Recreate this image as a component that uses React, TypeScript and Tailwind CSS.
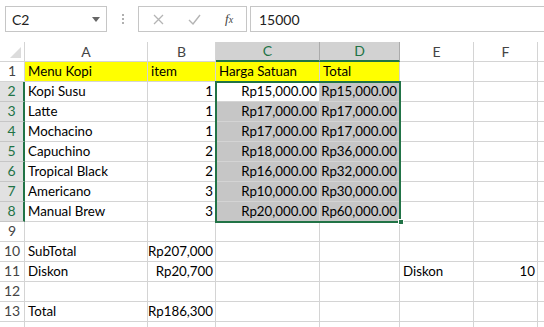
const font = { fontFamily: "Lato, 'Liberation Sans', sans-serif" };

type Cell = { t?: string; r?: boolean; y?: boolean; s?: boolean; w?: boolean };

const rows: Cell[][] = [
  [{ t: "Menu Kopi", y: true }, { t: "item", y: true }, { t: "Harga Satuan", y: true }, { t: "Total", y: true }, {}, {}],
  [{ t: "Kopi Susu" }, { t: "1", r: true }, { t: "Rp15,000.00", r: true, w: true }, { t: "Rp15,000.00", r: true, s: true }, {}, {}],
  [{ t: "Latte" }, { t: "1", r: true }, { t: "Rp17,000.00", r: true, s: true }, { t: "Rp17,000.00", r: true, s: true }, {}, {}],
  [{ t: "Mochacino" }, { t: "1", r: true }, { t: "Rp17,000.00", r: true, s: true }, { t: "Rp17,000.00", r: true, s: true }, {}, {}],
  [{ t: "Capuchino" }, { t: "2", r: true }, { t: "Rp18,000.00", r: true, s: true }, { t: "Rp36,000.00", r: true, s: true }, {}, {}],
  [{ t: "Tropical Black" }, { t: "2", r: true }, { t: "Rp16,000.00", r: true, s: true }, { t: "Rp32,000.00", r: true, s: true }, {}, {}],
  [{ t: "Americano" }, { t: "3", r: true }, { t: "Rp10,000.00", r: true, s: true }, { t: "Rp30,000.00", r: true, s: true }, {}, {}],
  [{ t: "Manual Brew" }, { t: "3", r: true }, { t: "Rp20,000.00", r: true, s: true }, { t: "Rp60,000.00", r: true, s: true }, {}, {}],
  [{}, {}, {}, {}, {}, {}],
  [{ t: "SubTotal" }, { t: "Rp207,000", r: true }, {}, {}, {}, {}],
  [{ t: "Diskon" }, { t: "Rp20,700", r: true }, {}, {}, { t: "Diskon" }, { t: "10", r: true }],
  [{}, {}, {}, {}, {}, {}],
  [{ t: "Total" }, { t: "Rp186,300", r: true }, {}, {}, {}, {}],
  [{}, {}, {}, {}, {}, {}],
];

const cols = ["A", "B", "C", "D", "E", "F", ""];

export default function App() {
  return (
    <div className="w-[544px] h-[327px] overflow-hidden bg-white relative" style={font}>
      {/* formula bar */}
      <div className="h-[42px] flex items-start pt-[6px] pl-[5px]">
        <div className="w-[102px] h-[26px] border border-[#c6c6c6] flex items-center justify-between pl-[6px] pr-[6px] text-[14px] text-[#222]">
          <span>C2</span>
          <svg width="8" height="5" viewBox="0 0 8 5"><path d="M0 0h8L4 5z" fill="#666" /></svg>
        </div>
        <div className="w-[31px] h-[26px] flex flex-col items-center justify-center gap-[2px]">
          <span className="w-[2px] h-[2px] bg-[#b0b0b0]" />
          <span className="w-[2px] h-[2px] bg-[#b0b0b0]" />
          <span className="w-[2px] h-[2px] bg-[#b0b0b0]" />
        </div>
        <div className="w-[109px] h-[26px] border border-[#c6c6c6] flex items-center pl-[14px]">
          <svg width="11" height="11" viewBox="0 0 11 11"><path d="M1 1l9 9M10 1l-9 9" stroke="#b4b4b4" strokeWidth="1.3" /></svg>
          <svg className="ml-[24px]" width="13" height="11" viewBox="0 0 13 11"><path d="M1 6l4 4 7-9" stroke="#b4b4b4" strokeWidth="1.4" fill="none" /></svg>
          <span className="ml-[24px] text-[13px] italic text-[#444]" style={{ fontFamily: "'Liberation Serif', serif" }}>f<span className="text-[10px]">x</span></span>
        </div>
        <div className="ml-[3px] flex-1 h-[26px] border border-[#c6c6c6] border-r-0 flex items-center pl-[8px] text-[14px] text-[#222]">
          15000
        </div>
      </div>

      {/* grid */}
      <div className="grid grid-cols-[25px_123px_68px_104px_80px_74px_64px_20px] auto-rows-[20px] text-[13.3px] leading-none">
        <div className="border-r border-b border-[#d4d4d4] flex items-end justify-end p-[3px]">
          <svg width="11" height="11" viewBox="0 0 11 11"><path d="M11 0v11H0z" fill="#dcdcdc" /></svg>
        </div>
        {cols.map((c, i) => {
          const sel = c === "C" || c === "D";
          return (
            <div
              key={i}
              className={
                sel
                  ? "bg-[#d2d2d2] border-r border-[#ababab] border-b-2 border-b-[#217346] flex items-center justify-center text-[#217346] text-[14px]"
                  : "border-r border-b border-[#d4d4d4] flex items-center justify-center text-[#444] text-[14px]"
              }
            >
              {c}
            </div>
          );
        })}
        {rows.map((row, ri) => {
          const n = ri + 1;
          const selRow = n >= 2 && n <= 8;
          return [
            <div
              key={"h" + n}
              className={
                selRow
                  ? "bg-[#e1e1e1] border-b border-[#c6c6c6] border-r-2 border-r-[#217346] flex items-end justify-center pb-[3px] text-[#217346] text-[14px]"
                  : "border-r border-b border-[#d4d4d4] flex items-end justify-center pb-[3px] text-[#444] text-[14px]"
              }
            >
              {n < 14 ? n : ""}
            </div>,
            ...row.map((c, ci) => (
              <div
                key={n + "-" + ci}
                className={
                  (c.y ? "bg-[#ffff00] " : c.s ? "bg-[#c6c6c6] " : "") +
                  "border-r border-b border-[#d4d4d4] flex items-end pb-[3px] whitespace-nowrap text-black " +
                  (c.r ? "justify-end pr-[2px]" : "pl-[3px]")
                }
              >
                {c.t}
              </div>
            )),
            <div key={"g" + n} className="border-b border-[#d4d4d4]" />,
          ];
        })}
      </div>

      {/* selection outline C2:D8 */}
      <div className="absolute left-[215px] top-[81px] w-[186px] h-[142px] border-2 border-[#217346] pointer-events-none" />
      <div className="absolute left-[398px] top-[219px] w-[6px] h-[6px] bg-[#217346] border border-white" />
    </div>
  );
}
